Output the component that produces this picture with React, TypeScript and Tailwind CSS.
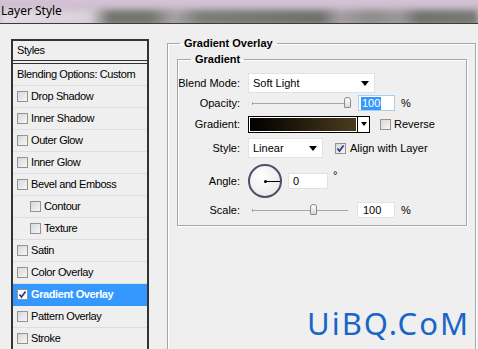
import React from 'react';

const Check: React.FC<{ checked?: boolean; onBlue?: boolean }> = ({ checked, onBlue }) => (
  <span
    className={`flex w-[11px] h-[11px] shrink-0 items-center justify-center border border-[#939393] ${
      onBlue ? 'bg-white' : 'bg-[linear-gradient(135deg,#d8d8d8,#f6f6f6)]'
    }`}
  >
    {checked && (
      <svg width="9" height="9" viewBox="0 0 9 9">
        <path d="M1.5 4.5 L3.5 7 L7.5 1.5" fill="none" stroke="#2b3f8f" strokeWidth="1.8" />
      </svg>
    )}
  </span>
);

const Arrow: React.FC = () => (
  <svg width="8" height="5" viewBox="0 0 8 5">
    <path d="M0 0 H8 L4 5 Z" fill="#000" />
  </svg>
);

const Slider: React.FC<{ pos: number }> = ({ pos }) => (
  <div className="relative w-[104px] h-[16px] shrink-0">
    <div className="absolute left-[4px] right-[4px] top-[8px] h-px bg-[#a7a7a7]" />
    <div className="absolute left-[4px] top-[7px] w-px h-[3px] bg-[#a7a7a7]" />
    <div
      className="absolute top-[2px] w-[7px] h-[11px] rounded-t-[3px] rounded-b-[1px] border border-[#8a8a8a] bg-[linear-gradient(#ffffff,#d8d8d8)]"
      style={{ left: pos }}
    />
  </div>
);

const Row: React.FC<{ label: string; className?: string; children: React.ReactNode }> = ({ label, className = '', children }) => (
  <div className={`flex items-center ${className}`}>
    <span className="w-[64px] shrink-0 pr-[2px] text-right">{label}</span>
    <div className="ml-[6px] flex items-center">{children}</div>
  </div>
);

const items: { name: string; indent?: boolean; selected?: boolean; checked?: boolean }[] = [
  { name: 'Drop Shadow' },
  { name: 'Inner Shadow' },
  { name: 'Outer Glow' },
  { name: 'Inner Glow' },
  { name: 'Bevel and Emboss' },
  { name: 'Contour', indent: true },
  { name: 'Texture', indent: true },
  { name: 'Satin' },
  { name: 'Color Overlay' },
  { name: 'Gradient Overlay', selected: true, checked: true },
  { name: 'Pattern Overlay' },
  { name: 'Stroke' },
];

export default function App() {
  return (
    <div className="relative w-[478px] h-[349px] overflow-hidden bg-[#efefef] font-['Liberation_Sans',Arial,sans-serif] text-[11px] leading-[13px] text-black">
      {/* title bar */}
      <div className="relative h-[24px] overflow-hidden border-b border-[#3c3c3c] bg-[linear-gradient(#d3c3d5,#c6b3c8)]">
        <div className="absolute left-0 right-0 top-[10px] h-[16px] blur-[3px] bg-[linear-gradient(to_right,#e6dee6_0px,#d9d0da_90px,#6f756b_110px,#737868_150px,#a9a2a8_175px,#7a7f76_200px,#6c7268_320px,#a59ea5_340px,#8d8d88_370px,#9a979a_400px,#6f736c_420px,#767a72_478px)]" />
        <span className="relative block pl-[1px] pt-[3px] font-['Noto_Sans',sans-serif] text-[12px] leading-[16px] text-black">
          Layer Style
        </span>
      </div>

      <div className="flex pt-[15px] pl-[11px]">
        {/* styles list */}
        <div className="w-[138px] h-[330px] shrink-0 border-2 border-[#333] bg-[#efefef] tracking-[-0.4px]">
          <div className="flex h-[23px] items-center border-b-4 border-double border-[#333] pl-[4px]">Styles</div>
          <div className="flex h-[22px] items-center border-b border-[#dedede] pl-[4px]">Blending Options: Custom</div>
          {items.map((it) => (
            <div
              key={it.name}
              className={`flex h-[22px] items-center gap-[3px] border-b ${
                it.selected ? 'border-[#3399ff] bg-[#3399ff] font-bold text-white' : 'border-[#dedede]'
              } ${it.indent ? 'pl-[17px]' : 'pl-[4px]'}`}
            >
              <Check checked={it.checked} onBlue={it.selected} />
              <span>{it.name}</span>
            </div>
          ))}
        </div>

        {/* settings */}
        <fieldset className="ml-[18px] mt-[-2px] w-[309px] h-[330px] shrink-0 border border-[#a6a6a6] pl-[9px] shadow-[inset_1px_1px_0_#ffffff,1px_1px_0_#ffffff]">
          <legend className="ml-[3px] px-[4px] font-bold leading-[13px]">Gradient Overlay</legend>
          <fieldset className="mt-[3px] w-[290px] border border-[#a6a6a6] pb-[7px] shadow-[inset_1px_1px_0_#ffffff,1px_1px_0_#ffffff]">
            <legend className="ml-[13px] px-[4px] font-bold leading-[13px]">Gradient</legend>

            <Row label="Blend Mode:" className="mt-[7px] h-[20px]">
              <div className="flex h-[20px] w-[127px] items-center justify-between border border-[#e2e2e2] bg-white pl-[4px] pr-[5px]">
                <span>Soft Light</span>
                <Arrow />
              </div>
            </Row>

            <Row label="Opacity:" className="mt-[2px] h-[16px]">
              <Slider pos={96} />
              <div className="ml-[6px] flex h-[16px] w-[37px] items-center border border-[#a9cff0] bg-white pl-[2px]">
                <span className="bg-[#3399ff] px-px text-white">100</span>
              </div>
              <span className="ml-[6px]">%</span>
            </Row>

            <Row label="Gradient:" className="mt-[5px] h-[16px]">
              <div className="flex h-[17px] w-[110px] border border-black p-px bg-white">
                <div className="h-full w-full bg-[linear-gradient(to_right,#000000,#1d160a_40%,#4b3c1e)]" />
              </div>
              <div className="flex h-[17px] w-[12px] items-center justify-center border border-l-0 border-black bg-white">
                <svg width="6" height="4" viewBox="0 0 6 4">
                  <path d="M0 0 H6 L3 4 Z" fill="#000" />
                </svg>
              </div>
              <span className="ml-[10px]">
                <Check />
              </span>
              <span className="ml-[3px]">Reverse</span>
            </Row>

            <Row label="Style:" className="mt-[6px] h-[20px]">
              <div className="flex h-[20px] w-[75px] items-center justify-between border border-[#e2e2e2] bg-white pl-[4px] pr-[5px]">
                <span>Linear</span>
                <Arrow />
              </div>
              <span className="ml-[12px]">
                <Check checked />
              </span>
              <span className="ml-[4px]">Align with Layer</span>
            </Row>

            <Row label="Angle:" className="mt-[6px] h-[34px]">
              <div className="relative h-[34px] w-[34px] rounded-full border-2 border-[#4b5068] bg-[radial-gradient(circle_at_40%_35%,#ffffff,#e4e4e8)]">
                <div className="absolute left-[14px] top-[14px] h-[3px] w-[3px] rounded-full bg-black" />
                <div className="absolute left-[15px] right-0 top-[15px] h-px bg-black" />
              </div>
              <div className="ml-[6px] flex h-[16px] w-[40px] items-center border border-[#e2e2e2] bg-white pl-[4px]">0</div>
              <span className="ml-[5px] self-start mt-[5px]">°</span>
            </Row>

            <Row label="Scale:" className="mt-[4px] h-[16px]">
              <Slider pos={62} />
              <div className="ml-[5px] flex h-[16px] w-[38px] items-center border border-[#e2e2e2] bg-white pl-[5px]">100</div>
              <span className="ml-[6px]">%</span>
            </Row>
          </fieldset>
        </fieldset>
      </div>

      {/* watermark */}
      <span className="absolute left-[307px] top-[303px] font-['Noto_Sans',sans-serif] text-[31px] leading-[40px] tracking-[2px] text-[#1766c8]">
        UiBQ.CoM
      </span>
    </div>
  );
}
